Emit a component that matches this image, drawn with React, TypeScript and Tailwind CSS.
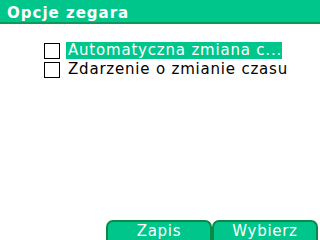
import React from "react";

const items = [
  { label: "Automatyczna zmiana c...", selected: true },
  { label: "Zdarzenie o zmianie czasu", selected: false },
];

function Checkbox() {
  return <div className="h-[16px] w-[16px] shrink-0 border border-black bg-white" />;
}

export default function App() {
  return (
    <div
      className="flex h-[240px] w-[320px] flex-col overflow-hidden bg-white"
      style={{ fontFamily: '"DejaVu Sans", sans-serif' }}
    >
      <div className="h-[24px] shrink-0 border-b-2 border-[#0a9a58] bg-[#00c68c] pl-[7px] pt-[4px] text-[15px] font-bold leading-[18px] tracking-[1px] text-white">
        Opcje zegara
      </div>

      <div className="flex flex-1 flex-col gap-[2px] pl-[44px] pt-[18px]">
        {items.map((item) => (
          <div key={item.label} className="flex h-[17px] items-center gap-[6px]">
            <Checkbox />
            <span
              className={
                item.selected
                  ? "bg-[#00c68c] pl-[2px] text-[15px] leading-[17px] tracking-[0.8px] text-white"
                  : "pl-[2px] text-[15px] leading-[17px] tracking-[0.8px] text-black"
              }
            >
              {item.label}
            </span>
          </div>
        ))}
      </div>

      <div className="flex h-[20px] shrink-0 justify-end pr-[2px]">
        <button className="h-[20px] w-[106px] rounded-t-[7px] border-2 border-b-0 border-[#0a8a46] bg-[#00c68c] text-[15px] leading-[18px] tracking-[0.7px] text-white">
          Zapis
        </button>
        <button className="h-[20px] w-[106px] rounded-t-[7px] border-2 border-b-0 border-[#0a8a46] bg-[#00c68c] text-[15px] leading-[18px] tracking-[0.7px] text-white">
          Wybierz
        </button>
      </div>
    </div>
  );
}
